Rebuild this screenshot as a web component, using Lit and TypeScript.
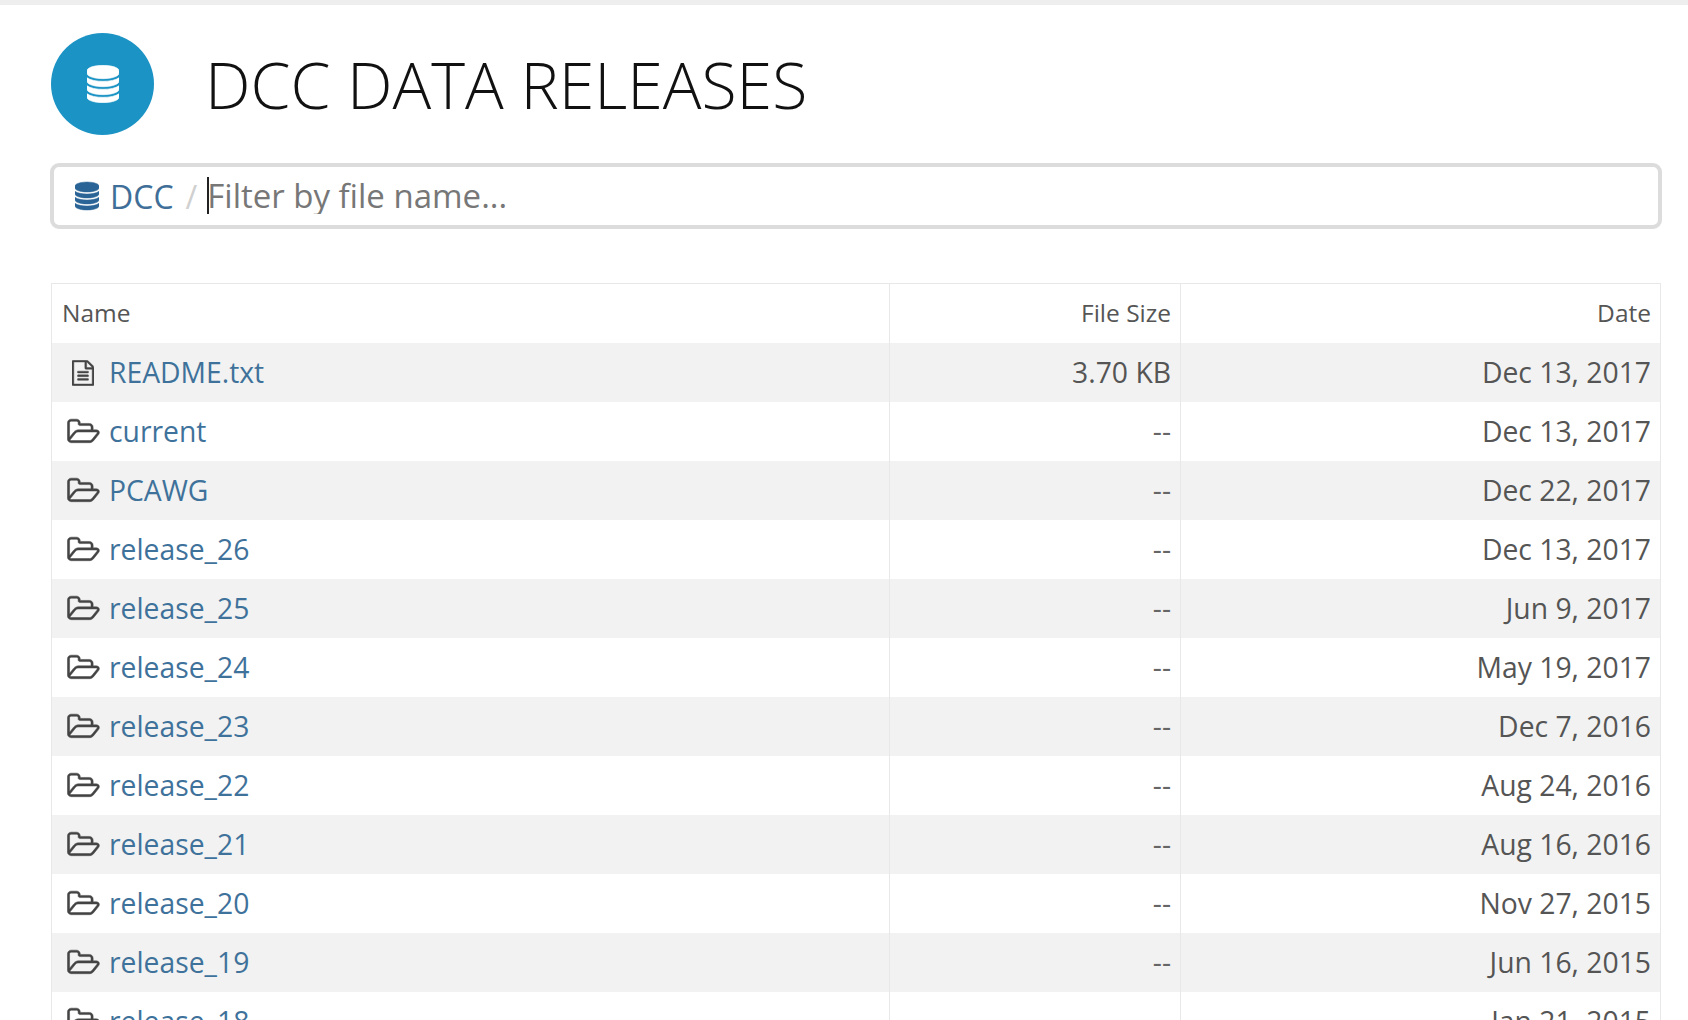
import { LitElement, html, css, svg } from "lit";
import { customElement } from "lit/decorators.js";

const DB = svg`<path d="M768 768q237 0 443-43t325-127v170q0 69-103 128t-280 93.5-385 34.5-385-34.5-280-93.5-103-128v-170q119 84 325 127t443 43zm0 768q237 0 443-43t325-127v170q0 69-103 128t-280 93.5-385 34.5-385-34.5-280-93.5-103-128v-170q119 84 325 127t443 43zm0-384q237 0 443-43t325-127v170q0 69-103 128t-280 93.5-385 34.5-385-34.5-280-93.5-103-128v-170q119 84 325 127t443 43zm0-1152q208 0 385 34.5t280 93.5 103 128v128q0 69-103 128t-280 93.5-385 34.5-385-34.5-280-93.5-103-128v-128q0-69 103-128t280-93.5 385-34.5z"/>`;
const FOLDER = svg`<path d="M1781 931q0-35-53-35h-1088q-40 0-85.5 21.5t-71.5 52.5l-294 363q-18 24-18 40 0 35 53 35h1088q40 0 86-22t71-53l294-363q18-22 18-39zm-1141-163h768v-160q0-40-28-68t-68-28h-576q-40 0-68-28t-28-68v-64q0-40-28-68t-68-28h-320q-40 0-68 28t-28 68v853l256-315q44-53 116-87.5t140-34.5zm1269 163q0 62-46 120l-295 363q-43 53-116 87.5t-140 34.5h-1088q-92 0-158-66t-66-158v-960q0-92 66-158t158-66h320q92 0 158 66t66 158v32h544q92 0 158 66t66 158v160h192q54 0 99 24.5t67 70.5q15 32 15 68z"/>`;
const FILE = svg`<path d="M1468 380q28 28 48 76t20 88v1152q0 40-28 68t-68 28h-1344q-40 0-68-28t-28-68v-1600q0-40 28-68t68-28h896q40 0 88 20t76 48zm-444-244v376h376q-10-29-22-41l-313-313q-12-12-41-22zm384 1528v-1024h-416q-40 0-68-28t-28-68v-416h-768v1536h1280zm-1024-864q0-14 9-23t23-9h704q14 0 23 9t9 23v64q0 14-9 23t-23 9h-704q-14 0-23-9t-9-23v-64zm736 224q14 0 23 9t9 23v64q0 14-9 23t-23 9h-704q-14 0-23-9t-9-23v-64q0-14 9-23t23-9h704zm0 256q14 0 23 9t9 23v64q0 14-9 23t-23 9h-704q-14 0-23-9t-9-23v-64q0-14 9-23t23-9h704z"/>`;

const ROWS: [string, string, string][] = [
  ["README.txt", "3.70 KB", "Dec 13, 2017"],
  ["current", "--", "Dec 13, 2017"],
  ["PCAWG", "--", "Dec 22, 2017"],
  ["release_26", "--", "Dec 13, 2017"],
  ["release_25", "--", "Jun 9, 2017"],
  ["release_24", "--", "May 19, 2017"],
  ["release_23", "--", "Dec 7, 2016"],
  ["release_22", "--", "Aug 24, 2016"],
  ["release_21", "--", "Aug 16, 2016"],
  ["release_20", "--", "Nov 27, 2015"],
  ["release_19", "--", "Jun 16, 2015"],
  ["release_18", "--", "Jan 21, 2015"],
];

@customElement("app-root")
export class AppRoot extends LitElement {
  static styles = css`
    :host {
      display: block;
      height: 1020px;
      overflow: hidden;
      background: #fff;
      font-family: "Open Sans", sans-serif;
      box-sizing: border-box;
      border-top: 5px solid #eeeeee;
      padding: 28px 27px 0 51px;
    }
    .head { display: flex; align-items: center; gap: 51px; height: 102px; }
    .badge {
      width: 103px; height: 102px; border-radius: 50%;
      background: #1b93c4;
      display: flex; align-items: center; justify-content: center;
    }
    .badge svg { width: 32px; height: 38px; fill: #fff; stroke: #fff; stroke-width: 30; }
    h1 { margin: 0; font-size: 64.4px; font-weight: 300; color: #111; line-height: 1; white-space: nowrap; }
    .search {
      margin: 28px -1px 54px -1px;
      height: 66px; box-sizing: border-box;
      border: 4px solid #dcdcdc; border-radius: 9px;
      display: flex; align-items: center;
      padding-left: 21px;
      font-size: 32px;
    }
    .search svg { width: 24px; height: 30px; fill: #2a6496; stroke: #2a6496; stroke-width: 30; margin-right: 11px; }
    .crumb { color: #3f6f98; }
    .sep { color: #d0d0d0; margin: 0 10px 0 12px; }
    .search input {
      flex: 1; border: 0; outline: 0; padding: 0; background: transparent;
      box-shadow: inset 2px 0 #222; height: 37px;
      font: inherit; font-size: 33px; color: #666; margin: -1px 10px 0 0;
    }
    .search input::placeholder { color: #777; opacity: 1; }
    table {
      width: 100%; table-layout: fixed; border-collapse: collapse;
      border: 1px solid #e8e8e8;
    }
    th, td {
      height: 59px; padding: 0 9px 0 10px; box-sizing: border-box;
      border-left: 1px solid #e8e8e8; border-right: 1px solid #e8e8e8;
      white-space: nowrap;
    }
    th { font-size: 24.5px; font-weight: 400; color: #555; text-align: right; padding-bottom: 2px; }
    th:first-child { text-align: left; }
    td { font-size: 28.3px; color: #555; text-align: right; }
    td.dash { color: #666; }
    td:first-child { text-align: left; }
    tbody tr:nth-child(odd) td { background: #f2f2f2; }
    .c1 { width: 838px; } .c2 { width: 291px; }
    .name { display: flex; align-items: center; gap: 8px; color: #3f729b; }
    .icon { width: 36px; display: flex; justify-content: center; flex: none; padding: 1px 0 0 3px; }
    .icon svg { fill: #444; stroke: #444; stroke-width: 30; height: 30px; }
    .icon svg.folder { width: 33px; }
    .icon svg.file { width: 22px; height: 26px; }
  `;

  render() {
    return html`
      <div class="head">
        <div class="badge"><svg viewBox="0 0 1536 1792">${DB}</svg></div>
        <h1>DCC DATA RELEASES</h1>
      </div>
      <div class="search">
        <svg viewBox="0 0 1536 1792">${DB}</svg>
        <span class="crumb">DCC</span><span class="sep">/</span>
        <input placeholder="Filter by file name..." />
      </div>
      <table>
        <colgroup><col class="c1" /><col class="c2" /><col /></colgroup>
        <thead><tr><th>Name</th><th>File Size</th><th>Date</th></tr></thead>
        <tbody>
          ${ROWS.map(
            ([n, s, d], i) => html`<tr>
              <td>
                <div class="name">
                  <span class="icon">
                    ${i === 0
                      ? html`<svg class="file" viewBox="0 0 1536 1792">${FILE}</svg>`
                      : html`<svg class="folder" viewBox="0 0 1920 1792">${FOLDER}</svg>`}
                  </span>
                  <span>${n}</span>
                </div>
              </td>
              <td class=${s === "--" ? "dash" : ""}>${s}</td>
              <td>${d}</td>
            </tr>`
          )}
        </tbody>
      </table>
    `;
  }
}
